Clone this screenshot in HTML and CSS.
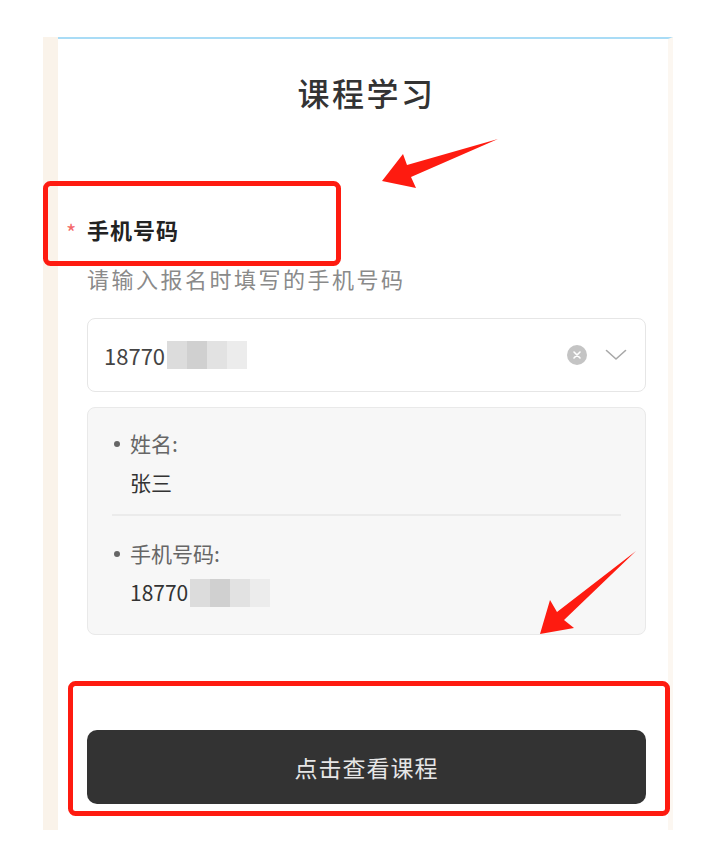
FILE: index.html
```html
<!DOCTYPE html>
<html lang="zh-CN">
<head>
    <meta charset="UTF-8">
    <meta name="viewport" content="width=device-width, initial-scale=1.0">
    <title>课程学习</title>
    <link rel="stylesheet" href="styles.css">
</head>
<body>
    <div class="frame">
        <div class="strip"></div>
        <div class="panel">
            <h1>课程学习</h1>
            <div class="field-label"><span class="req">*</span>手机号码</div>
            <p class="hint">请输入报名时填写的手机号码</p>
            <div class="select">
                <span class="value">18770<span class="mosaic"><i></i><i></i><i></i><i></i></span></span>
                <svg class="clear" width="20" height="20" viewBox="0 0 20 20">
                    <circle cx="10" cy="10" r="10" fill="#c4c4c4"/>
                    <path d="M7 7 L13 13 M13 7 L7 13" stroke="#fff" stroke-width="1.6" stroke-linecap="round"/>
                </svg>
                <svg class="arrow-down" width="22" height="12" viewBox="0 0 22 12">
                    <path d="M1.5 1.5 L11 10 L20.5 1.5" fill="none" stroke="#a8a8a8" stroke-width="1.6" stroke-linecap="round" stroke-linejoin="round"/>
                </svg>
            </div>
            <div class="info-card">
                <div class="info-item">
                    <div class="info-key">姓名:</div>
                    <div class="info-val">张三</div>
                </div>
                <div class="info-item">
                    <div class="info-key">手机号码:</div>
                    <div class="info-val">18770<span class="mosaic"><i></i><i></i><i></i><i></i></span></div>
                </div>
            </div>
            <button class="submit">点击查看课程</button>
        </div>
    </div>

    <!-- annotation marks drawn over the screenshot -->
    <svg class="marks" width="708" height="842" viewBox="0 0 708 842">
        <rect x="45.5" y="183.5" width="293" height="80" rx="5" fill="none" stroke="#fe1b10" stroke-width="5"/>
        <rect x="70.5" y="683.5" width="597" height="130" rx="5" fill="none" stroke="#fe1b10" stroke-width="5"/>
        <polygon points="382,181 403,154 407,165 498,139 411,177 416,188" fill="#fe1b10"/>
        <polygon points="540,634 550,600 557,612 636,551 564,620 574,628" fill="#fe1b10"/>
    </svg>
</body>
</html>
```

FILE: styles.css
```css
body {
    margin: 0;
    background: #fff;
    font-family: "Noto Sans CJK SC", "Noto Sans", sans-serif;
    color: #333;
    position: relative;
    width: 708px;
    height: 842px;
}
.frame {
    display: flex;
    margin: 37px 35px 0 43px;
    height: 793px;
}
.strip {
    width: 15px;
    background: #faf3ea;
}
.panel {
    flex: 1;
    border-top: 2px solid #a9dcf6;
    border-right: 5px solid #fcf7f1;
    padding: 33px 22px 0 29px;
}
h1 {
    margin: 0;
    text-align: center;
    font-size: 32px;
    line-height: 40px;
    font-weight: 500;
    color: #333;
    letter-spacing: 2.5px;
}
.field-label {
    margin: 101px 0 0 -21px;
    font-size: 22px;
    line-height: 32px;
    font-weight: 700;
    color: #222;
    letter-spacing: 1px;
}
.req {
    display: inline-block;
    width: 21px;
    color: #f46a6a;
    font-weight: 400;
    font-size: 22px;
    vertical-align: -2px;
}
.hint {
    margin: 15px 0 0;
    font-size: 22px;
    line-height: 32px;
    color: #8a8a8a;
    letter-spacing: 2.5px;
}
.select {
    margin-top: 24px;
    height: 72px;
    border: 1px solid #e6e6e6;
    border-radius: 8px;
    display: flex;
    align-items: center;
    padding: 0 18px 0 16px;
}
.value {
    flex: 1;
    font-size: 22px;
    color: #444;
    display: flex;
    align-items: center;
}
.mosaic {
    display: inline-flex;
    height: 28px;
    margin-left: 2px;
}
.mosaic i {
    width: 20px;
    background: #dcdcdc;
}
.mosaic i:nth-child(2) { background: #d0d0d0; }
.mosaic i:nth-child(3) { background: #e2e2e2; }
.mosaic i:nth-child(4) { background: #ececec; }
.clear {
    margin-right: 18px;
}
.info-card {
    margin-top: 15px;
    background: #f7f7f7;
    border: 1px solid #e9e9e9;
    border-radius: 8px;
    padding: 16px 24px 22px;
}
.info-item {
    padding: 0 0 12px 18px;
    position: relative;
    font-size: 21px;
    line-height: 39px;
}
.info-item::before {
    content: "";
    position: absolute;
    left: 2px;
    top: 17px;
    width: 6px;
    height: 6px;
    border-radius: 50%;
    background: #666;
}
.info-item + .info-item {
    border-top: 2px solid #ebebeb;
    padding-top: 18px;
    padding-bottom: 0;
}
.info-item + .info-item::before {
    top: 35px;
}
.info-key {
    color: #666;
}
.info-val {
    color: #333;
    display: flex;
    align-items: center;
}
.submit {
    display: block;
    width: 100%;
    margin-top: 95px;
    height: 74px;
    border: none;
    border-radius: 10px;
    background: #333;
    color: #e6e6e6;
    font-family: inherit;
    font-size: 23px;
    letter-spacing: 1px;
}
.marks {
    position: absolute;
    left: 0;
    top: 0;
    pointer-events: none;
}
```
